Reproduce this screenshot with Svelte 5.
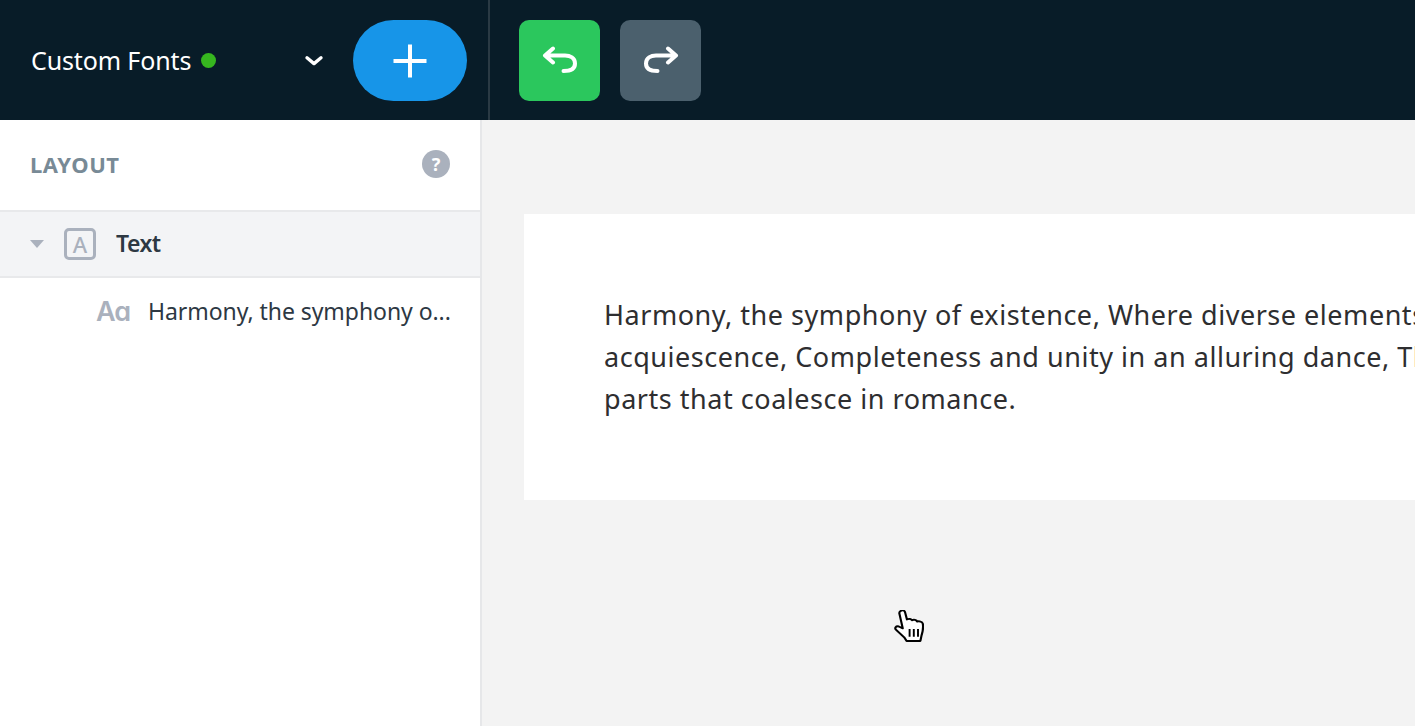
<script>
  const lines = [
    'Harmony, the symphony of existence, Where diverse elements entwine in acquiescence,',
    'acquiescence, Completeness and unity in an alluring dance, The whole made of many',
    'parts that coalesce in romance.'
  ];
</script>

<div class="app">
  <header class="topbar">
    <div class="project">
      <span class="name">Custom Fonts</span>
      <span class="dot"></span>
      <svg class="chev" width="20" height="12" viewBox="0 0 20 12"><path d="M3 2.800 10 8.600 17 2.800" fill="none" stroke="#fff" stroke-width="3.400" stroke-linecap="round" stroke-linejoin="round"/></svg>
      <button class="add" aria-label="Add">
        <svg width="36" height="36" viewBox="0 0 36 36"><path d="M18 1.500V34.500M1.500 18H34.500" stroke="#fff" stroke-width="4"/></svg>
      </button>
    </div>
    <div class="history">
      <button class="hbtn undo" aria-label="Undo">
        <svg width="36" height="30" viewBox="0 0 36 30"><path d="M11 2.500 3 9.500 11 16.500M3.500 9.500H23C28 9.500 33 12 33 17.500 33 23 28 25 21.500 25" fill="none" stroke="#fff" stroke-width="4" stroke-linecap="round" stroke-linejoin="round"/></svg>
      </button>
      <button class="hbtn redo" aria-label="Redo">
        <svg width="36" height="30" viewBox="0 0 36 30"><path d="M25 2.500 33 9.500 25 16.500M32.500 9.500H13C8 9.500 3 12 3 17.500 3 23 8 25 14.500 25" fill="none" stroke="#fff" stroke-width="4" stroke-linecap="round" stroke-linejoin="round"/></svg>
      </button>
    </div>
  </header>

  <div class="body">
    <aside class="sidebar">
      <div class="side-head">
        <span class="title">LAYOUT</span>
        <span class="help">?</span>
      </div>
      <div class="row-text">
        <span class="caret"></span>
        <span class="a-box">A</span>
        <span class="row-label">Text</span>
      </div>
      <div class="row-child">
        <span class="aa">Aɑ</span>
        <span class="child-label">Harmony, the symphony o...</span>
      </div>
    </aside>

    <main class="canvas">
      <section class="card">
        {#each lines as line}
          <div class="line">{line}</div>
        {/each}
      </section>
    </main>
  </div>

  <svg class="cursor" width="30" height="32" viewBox="1 1.500 25 30.500" preserveAspectRatio="none">
    <path d="M6.500 2.500C8 1 10 2 10.300 4L11.800 10.500C13.500 9.500 15.500 10 16 11.300 17.500 10.300 19.800 11 20.200 12.500 22 11.800 24.500 12.500 25 14.500 25.500 18 25 22 24 25.500L23 31H11.500L9.500 27.500 2.800 20.500C1.200 18.800 2.500 16.500 5 17.200L8.300 19 5.500 5C5.300 4 5.800 3 6.500 2.500Z" fill="#fff" stroke="#000" stroke-width="1.800" stroke-linejoin="round"/>
    <path d="M14 19.500V27M17.500 19.500V27M21 19.500V27" stroke="#000" stroke-width="1.600"/>
  </svg>
</div>

<style>
  :global(body) {
    margin: 0;
    overflow: hidden;
  }
  .app {
    width: 1415px;
    height: 726px;
    overflow: hidden;
    position: relative;
    display: flex;
    flex-direction: column;
    font-family: "Noto Sans", "Open Sans", sans-serif;
  }
  button {
    border: 0;
    padding: 0;
    display: flex;
    align-items: center;
    justify-content: center;
  }
  .topbar {
    height: 120px;
    flex: none;
    background: #081c28;
    display: flex;
    align-items: center;
  }
  .project {
    width: 490px;
    height: 120px;
    box-sizing: border-box;
    border-right: 2px solid #2a3a44;
    display: flex;
    align-items: center;
    padding-left: 31px;
  }
  .name {
    color: #fff;
    font-size: 25px;
    letter-spacing: -0.13px;
    white-space: nowrap;
    line-height: 1;
  }
  .dot {
    width: 15px;
    height: 15px;
    border-radius: 50%;
    background: #36b61f;
    margin-left: 10px;
  }
  .chev {
    margin-left: 88px;
    margin-top: 1px;
  }
  .add {
    margin-left: 29px;
    width: 114px;
    height: 81px;
    border-radius: 41px;
    background: #1795e8;
    margin-top: 1px;
  }
  .history {
    display: flex;
    gap: 20px;
    padding-left: 29px;
    margin-top: 1px;
  }
  .hbtn {
    width: 81px;
    height: 81px;
    border-radius: 10px;
  }
  .undo { background: #2bc75d; }
  .redo { background: #4b606d; }
  .body {
    flex: 1;
    display: flex;
    min-height: 0;
  }
  .sidebar {
    width: 482px;
    flex: none;
    box-sizing: border-box;
    background: #fff;
    border-right: 2px solid #e6e7e9;
  }
  .side-head {
    height: 90px;
    display: flex;
    align-items: center;
    justify-content: space-between;
    padding: 0 30px;
    box-sizing: border-box;
  }
  .title {
    font-size: 22px;
    font-weight: 700;
    color: #788a96;
    letter-spacing: 0.55px;
    margin-top: -3px;
  }
  .help {
    width: 28px;
    height: 28px;
    border-radius: 50%;
    background: #aab1bd;
    color: #fff;
    font-size: 18px;
    font-weight: 700;
    display: flex;
    align-items: center;
    justify-content: center;
    margin-top: -3px;
    line-height: 1;
  }
  .row-text {
    height: 68px;
    box-sizing: border-box;
    background: #f3f4f6;
    border-top: 2px solid #e8e9eb;
    border-bottom: 2px solid #e8e9eb;
    display: flex;
    align-items: center;
    padding-left: 30px;
  }
  .caret {
    width: 0;
    height: 0;
    border-left: 7px solid transparent;
    border-right: 7px solid transparent;
    border-top: 8px solid #aab1bd;
  }
  .a-box {
    width: 32px;
    height: 32px;
    box-sizing: border-box;
    border: 3px solid #aab1bd;
    border-radius: 5px;
    margin-left: 20px;
    color: #aab1bd;
    font-size: 22px;
    font-weight: 500;
    display: flex;
    align-items: center;
    justify-content: center;
    line-height: 1;
  }
  .row-label {
    font-size: 23px;
    font-weight: 600;
    color: #2d3843;
    margin-left: 20px;
    letter-spacing: -0.5px;
    margin-bottom: 2px;
  }
  .row-child {
    height: 68px;
    display: flex;
    align-items: center;
    padding-left: 96px;
  }
  .aa {
    font-family: "Inter", "Noto Sans", sans-serif;
    color: #aab1bd;
    font-size: 27px;
    font-weight: 600;
    letter-spacing: -1.5px;
    width: 52px;
    flex: none;
    margin-bottom: 2px;
  }
  .child-label {
    color: #2d3843;
    font-size: 23px;
    white-space: nowrap;
    letter-spacing: -0.06px;
    margin-bottom: 2px;
  }
  .canvas {
    flex: 1;
    background: #f3f3f3;
    min-width: 0;
    padding: 94px 0 0 42px;
    box-sizing: border-box;
    overflow: hidden;
  }
  .card {
    width: 1400px;
    height: 286px;
    box-sizing: border-box;
    background: #fff;
    padding: 80px 0 0 80px;
  }
  .line {
    font-size: 27px;
    line-height: 42px;
    color: #2e2e30;
    white-space: nowrap;
    letter-spacing: 0.53px;
  }
  .cursor {
    position: absolute;
    left: 894px;
    top: 610px;
  }
</style>
